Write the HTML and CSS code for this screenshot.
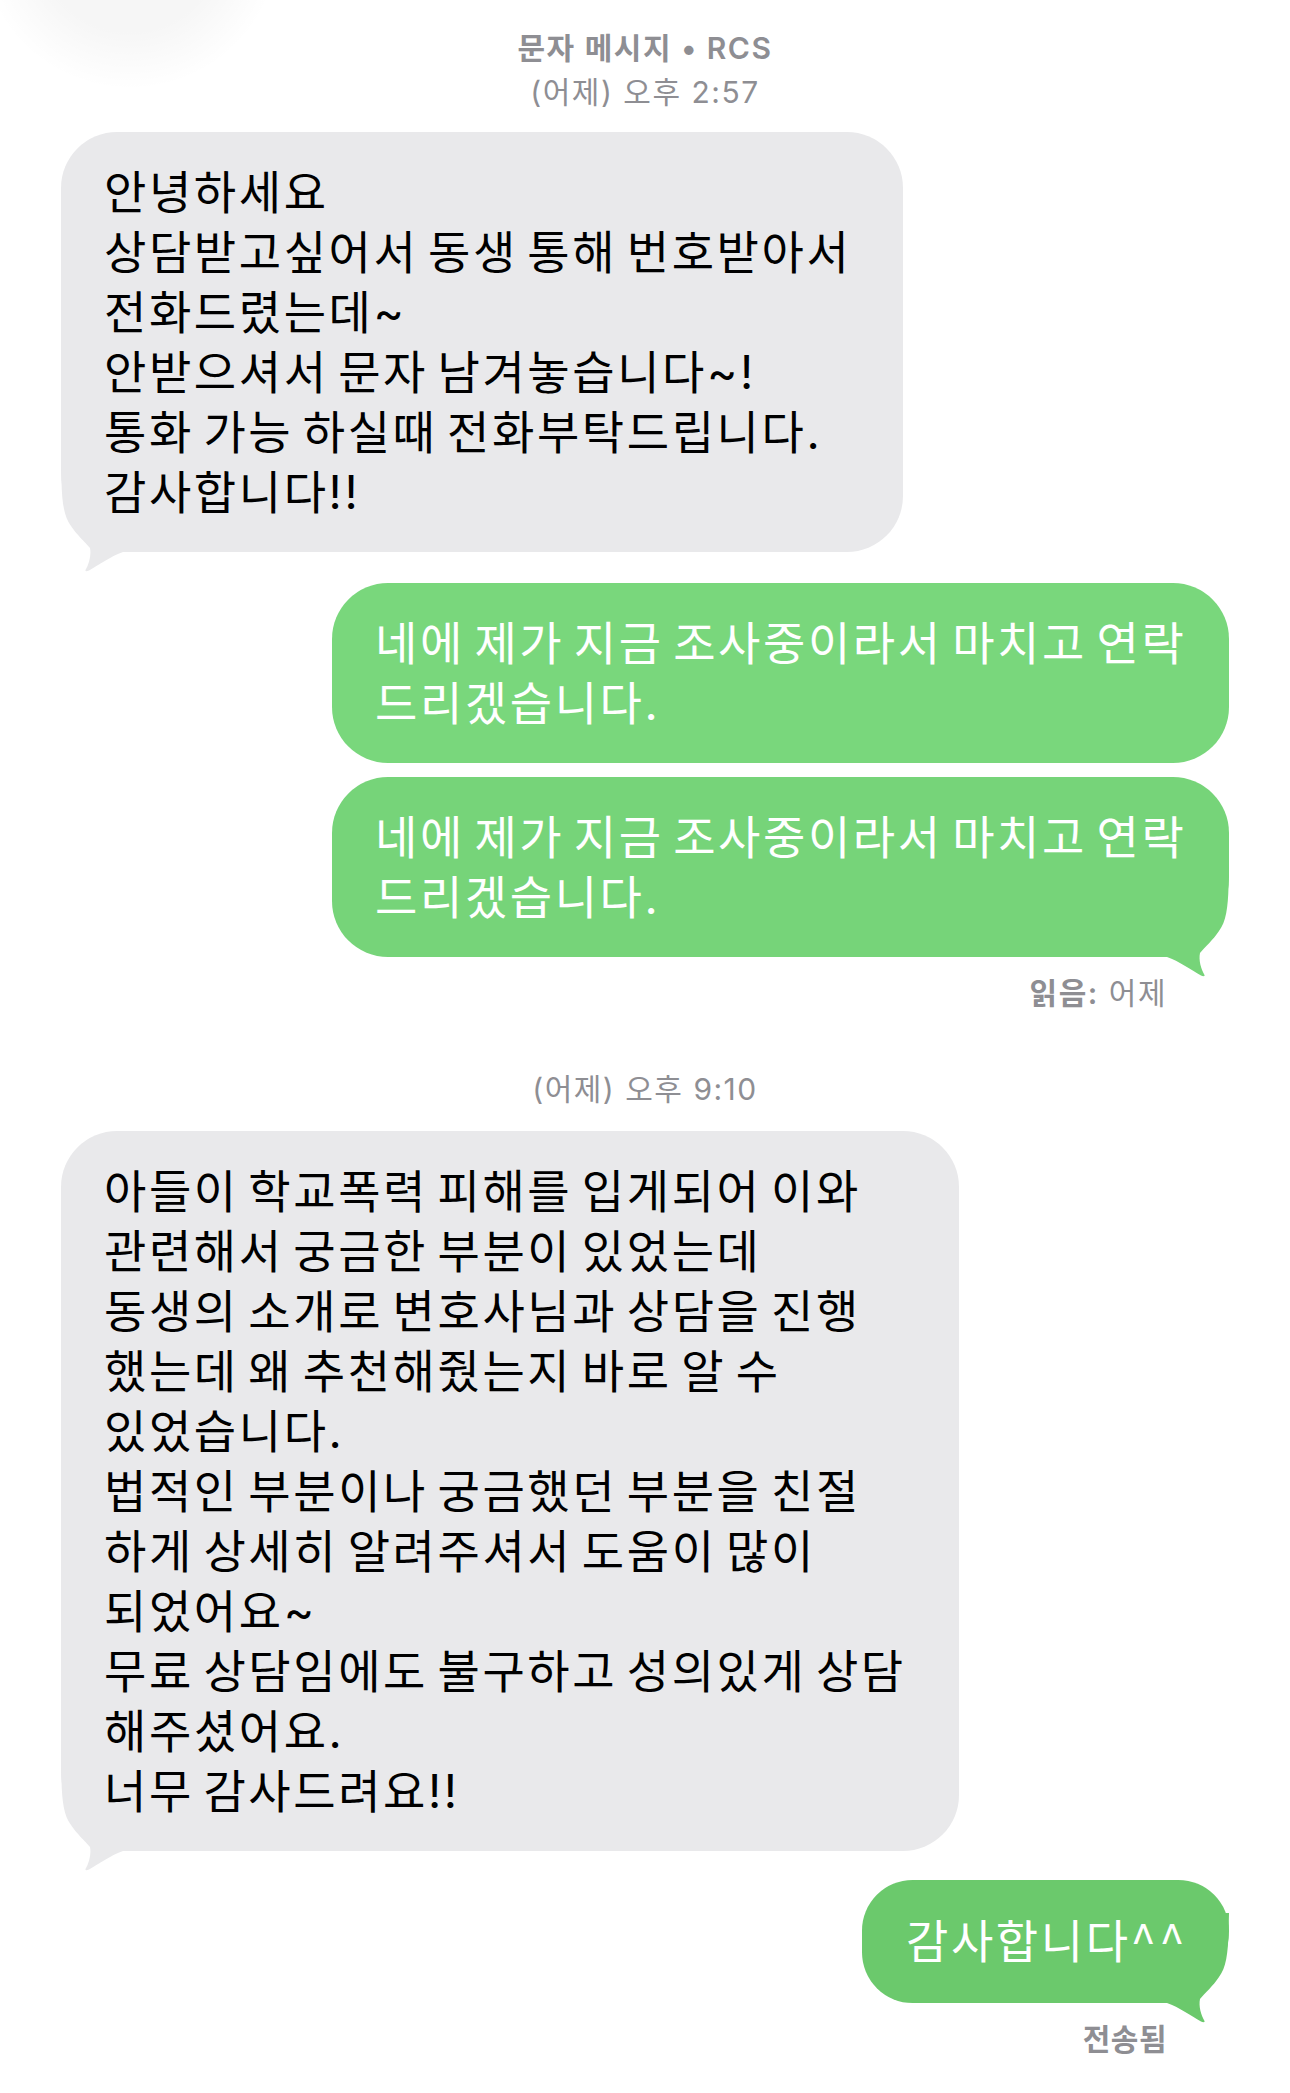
FILE: index.html
```html
<!DOCTYPE html>
<html lang="ko">
<head>
<meta charset="utf-8">
<title>메시지</title>
<link rel="stylesheet" href="styles.css">
</head>
<body>
<div class="screen">
  <div class="glow"></div>

  <div class="stamp stamp-top">
    <div class="stamp-title">문자 메시지 • RCS</div>
    <div>(어제) 오후 2:57</div>
  </div>

  <div class="bubble recv w-recv-a">
    <div class="bubble-text">안녕하세요<br>상담받고싶어서 동생 통해 번호받아서<br>전화드렸는데~<br>안받으셔서 문자 남겨놓습니다~!<br>통화 가능 하실때 전화부탁드립니다.<br>감사합니다!!</div>
    <svg class="tail tail-left" viewBox="0 -90 90 110" width="90" height="110" aria-hidden="true"><path d="M0 -90 L0.5 -70 C1 -50 3 -35 10 -26 C16 -17 24 -10 29 -4 C30.5 3 28 12 24.5 18 C24 19.5 26 19.5 28 18.5 C38 13 50 4 62 0 L90 0 L90 -90 Z"/></svg>
  </div>

  <div class="bubble sent green-a w-sent-wide gap-first-sent">
    <div class="bubble-text">네에 제가 지금 조사중이라서 마치고 연락<br>드리겠습니다.</div>
  </div>

  <div class="bubble sent green-b tailed w-sent-wide gap-group">
    <div class="bubble-text">네에 제가 지금 조사중이라서 마치고 연락<br>드리겠습니다.</div>
    <svg class="tail tail-right" viewBox="0 -90 90 110" width="90" height="110" aria-hidden="true"><path d="M0 -90 L0.5 -70 C1 -50 3 -35 10 -26 C16 -17 24 -10 29 -4 C30.5 3 28 12 24.5 18 C24 19.5 26 19.5 28 18.5 C38 13 50 4 62 0 L90 0 L90 -90 Z"/></svg>
  </div>

  <div class="status"><span class="status-strong">읽음:</span> 어제</div>

  <div class="stamp stamp-mid">(어제) 오후 9:10</div>

  <div class="bubble recv w-recv-b">
    <div class="bubble-text">아들이 학교폭력 피해를 입게되어 이와<br>관련해서 궁금한 부분이 있었는데<br>동생의 소개로 변호사님과 상담을 진행<br>했는데 왜 추천해줬는지 바로 알 수<br>있었습니다.<br>법적인 부분이나 궁금했던 부분을 친절<br>하게 상세히 알려주셔서 도움이 많이<br>되었어요~<br>무료 상담임에도 불구하고 성의있게 상담<br>해주셨어요.<br>너무 감사드려요!!</div>
    <svg class="tail tail-left" viewBox="0 -90 90 110" width="90" height="110" aria-hidden="true"><path d="M0 -90 L0.5 -70 C1 -50 3 -35 10 -26 C16 -17 24 -10 29 -4 C30.5 3 28 12 24.5 18 C24 19.5 26 19.5 28 18.5 C38 13 50 4 62 0 L90 0 L90 -90 Z"/></svg>
  </div>

  <div class="bubble sent green-c tailed w-sent-short gap-last-sent">
    <div class="bubble-text">감사합니다<span class="caret">^^</span></div>
    <svg class="tail tail-right" viewBox="0 -90 90 110" width="90" height="110" aria-hidden="true"><path d="M0 -90 L0.5 -70 C1 -50 3 -35 10 -26 C16 -17 24 -10 29 -4 C30.5 3 28 12 24.5 18 C24 19.5 26 19.5 28 18.5 C38 13 50 4 62 0 L90 0 L90 -90 Z"/></svg>
  </div>

  <div class="status status-last"><span class="status-strong">전송됨</span></div>
</div>
</body>
</html>
```

FILE: styles.css
```css
* {
  box-sizing: border-box;
}

html,
body {
  margin: 0;
  background: #ffffff;
}

body {
  font-family: "Inter", "Noto Sans CJK KR", sans-serif;
}

.screen {
  position: relative;
  width: 1290px;
  height: 2093px;
  overflow: hidden;
  padding: 26px 61px 0;
  display: flex;
  flex-direction: column;
}

.glow {
  position: absolute;
  left: -20px;
  top: -200px;
  width: 300px;
  height: 290px;
  border-radius: 50%;
  background: radial-gradient(closest-side, rgba(0, 0, 0, 0.035) 60%, rgba(0, 0, 0, 0) 100%);
  pointer-events: none;
}

.stamp {
  text-align: center;
  color: #8e8e93;
  font-size: 30px;
  line-height: 44px;
  letter-spacing: 1.5px;
}

.stamp-title {
  font-weight: 600;
}

.stamp-mid {
  margin-top: 54px;
}

.bubble {
  position: relative;
  font-size: 46px;
  line-height: 60px;
  letter-spacing: 2.6px;
  word-spacing: -6px;
  padding: 30px 43px 30px 43px;
  border-radius: 56px;
  white-space: nowrap;
}

.bubble-text {
  position: relative;
  z-index: 1;
}

.caret {
  font-family: "Noto Sans CJK KR", sans-serif;
  letter-spacing: 3px;
}

.recv {
  align-self: flex-start;
  background: #e9e9eb;
  color: #000000;
  border-bottom-left-radius: 80px;
  margin-top: 18px;
}

.recv .tail {
  fill: #e9e9eb;
}

.w-recv-a {
  width: 842px;
}

.w-recv-b {
  width: 898px;
  margin-top: 20px;
}

.sent {
  align-self: flex-end;
  color: #ffffff;
  background: var(--bubble);
}

.sent .tail {
  fill: var(--bubble);
}

.tailed {
  border-bottom-right-radius: 80px;
}

.green-a {
  --bubble: #79d77c;
}

.green-b {
  --bubble: #76d479;
}

.green-c {
  --bubble: #6bc96c;
}

.w-sent-wide {
  width: 897px;
}

.w-sent-short {
  width: 367px;
  padding-left: 44px;
  padding-top: 28px;
  padding-bottom: 32px;
}

.gap-first-sent {
  margin-top: 31px;
}

.gap-group {
  margin-top: 14px;
}

.gap-last-sent {
  margin-top: 29px;
}

.tail {
  position: absolute;
  bottom: -20px;
  z-index: 0;
  display: block;
}

.tail-left {
  left: 0;
}

.tail-right {
  right: 0;
  transform: scaleX(-1);
}

.status {
  align-self: flex-end;
  margin-top: 16px;
  margin-right: 62px;
  color: #8e8e93;
  font-size: 30px;
  line-height: 40px;
  letter-spacing: 1.5px;
}

.status-strong {
  font-weight: 600;
}

.status-last {
  margin-top: 16px;
  letter-spacing: 0.5px;
}
```
